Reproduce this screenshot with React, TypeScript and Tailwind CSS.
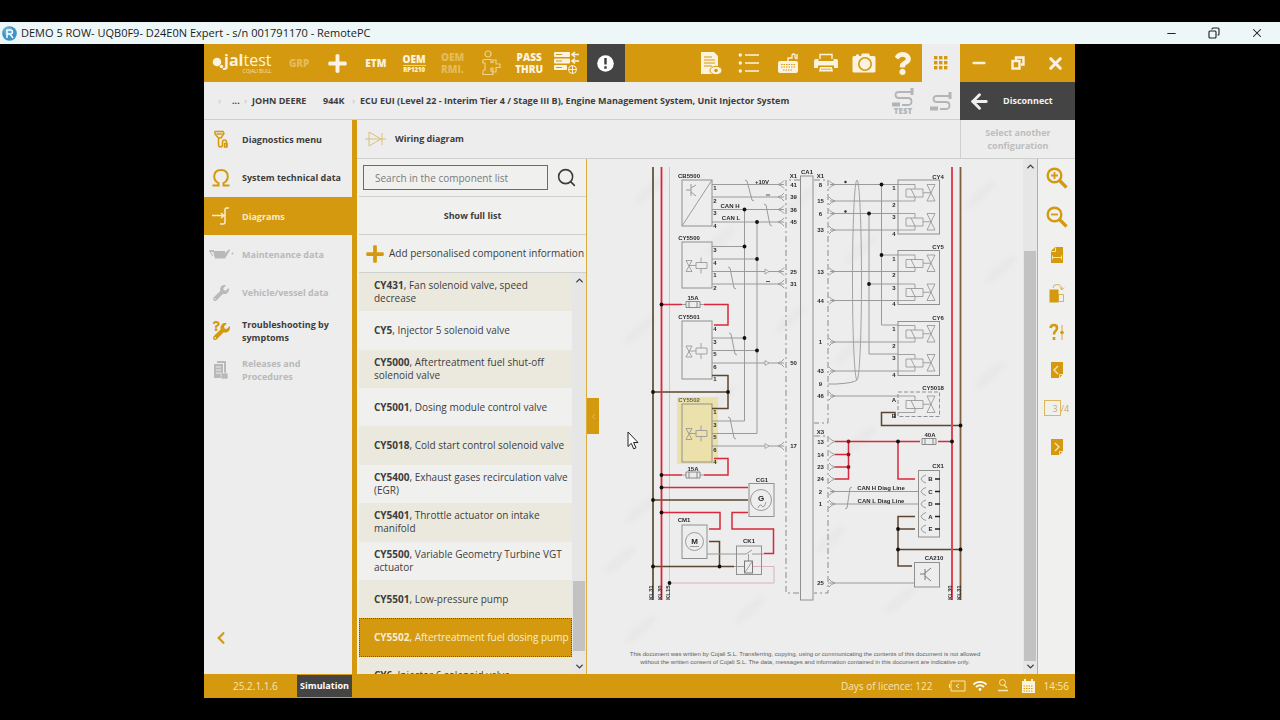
import type { ReactNode } from "react";
import { Minus, Copy, X, ArrowLeft, ChevronUp, ChevronDown, ChevronLeft, Search } from "lucide-react";
import { FaPlus, FaQuestion, FaWifi, FaWrench, FaChevronLeft } from "react-icons/fa";

const GREY = "#9a9a9a";
const RED = "#d8283c";
const BROWN = "#5c4630";

/* ---------- toolbar icons ---------- */

const ReportIcon = () => (
  <svg width="24" height="26" viewBox="0 0 24 26" fill="currentColor">
    <path d="M2 2h13l4 4v12H2z" />
    <path d="M5 7h8M5 10h11M5 13h11M5 16h8" stroke="#d4990e" strokeWidth="1" />
    <path d="M2 18h10l2 6H2z" />
    <ellipse cx="17" cy="20.5" rx="6" ry="4.2" stroke="#d4990e" strokeWidth="1" />
    <circle cx="17" cy="20.5" r="1.8" fill="#d4990e" />
  </svg>
);

const ListIcon = () => (
  <svg width="22" height="24" viewBox="0 0 22 24" fill="none" stroke="currentColor" strokeWidth="1.6">
    <path d="M7 4h14M7 12h14M7 20h14" />
    <g fill="currentColor" stroke="none">
      <circle cx="2.3" cy="4" r="1.7" />
      <circle cx="2.3" cy="12" r="1.7" />
      <circle cx="2.3" cy="20" r="1.7" />
    </g>
  </svg>
);

const KeyboardIcon = () => (
  <svg width="22" height="22" viewBox="0 0 22 22">
    <rect x="1" y="9" width="20" height="12" rx="2" fill="currentColor" />
    <path d="M11 9V6h4V3.500q0-1.500 1.500-1.500T18 3.500V5q0 1.500 2 1.500V2" fill="none" stroke="currentColor" strokeWidth="1.300" />
    <path d="M4 12.500h14M4 15h14M6 18h10" stroke="#d4990e" strokeWidth="1" strokeDasharray="1.500 1" />
  </svg>
);

const PrinterIcon = () => (
  <svg width="26" height="20" viewBox="0 0 26 20" fill="currentColor">
    <path d="M7 6V1.500h12V6" fill="none" stroke="currentColor" strokeWidth="1.400" />
    <path d="M3 6h2.500v2h15V6H23q2 0 2 2v7h-4v-2.500H5V15H1V8q0-2 2-2z" />
    <path d="M7 14h12l1 4.500H6z" />
    <path d="M8 16.200h10" stroke="#d4990e" strokeWidth=".8" />
  </svg>
);

const CameraIcon = () => (
  <svg width="24" height="22" viewBox="0 0 24 22">
    <path d="M2 4h2V2.500h3V4h2l1-2.500h7L18 4h4q1.500 0 1.500 1.500V19q0 1.500-1.500 1.500H2Q.500 20.500.500 19V5.500Q.500 4 2 4z" fill="currentColor" />
    <circle cx="13" cy="12" r="6.200" fill="none" stroke="#d4990e" strokeWidth="1.600" />
  </svg>
);

const ServersIcon = () => (
  <svg width="26" height="24" viewBox="0 0 26 24" fill="currentColor">
    <rect x="0" y="1" width="16" height="5" rx="1" />
    <rect x="0" y="7.500" width="16" height="5" rx="1" />
    <rect x="0" y="14" width="13" height="5" rx="1" />
    <path d="M2 3.500h6M2 10h6M2 16.500h6" stroke="#d4990e" strokeWidth="1" />
    <path d="M18 3.500h7M21 1l-3 2.500L21 6M18 10h7M21 7.500l-3 2.500 3 2.500" fill="none" stroke="currentColor" strokeWidth="1.600" />
    <circle cx="18.500" cy="18.500" r="4" fill="none" stroke="currentColor" strokeWidth="1" />
    <path d="M14.500 18.500h8M18.500 14.500v8" stroke="currentColor" strokeWidth="1" />
  </svg>
);

const InfoPlusIcon = () => (
  <svg width="22" height="26" viewBox="0 0 22 26" fill="none" stroke="currentColor" strokeWidth="1.200">
    <circle cx="8" cy="4" r="3" />
    <path d="M4 9.500h7v3h2V10h3v4h4v3.500h-4V22h-3v-4h-2v3q2 0 2 3.500H3Q2 20 5 20v-7H3q-1-2 1-3.500z" />
  </svg>
);

const GridIcon = () => (
  <svg width="14" height="14" viewBox="0 0 14 14" fill="#d4990e">
    {[0, 5, 10].map((x) => [0, 5, 10].map((y) => <rect key={`${x}-${y}`} x={x} y={y} width="3.400" height="3.400" />))}
  </svg>
);

const RestoreIcon = () => (
  <svg width="14" height="14" viewBox="0 0 14 14" fill="none" stroke="currentColor" strokeWidth="2.400">
    <path d="M5 4.500V1.500h7.500v7H10" />
    <rect x="1.500" y="5" width="7" height="7.500" />
  </svg>
);

const CableIcon = ({ label }: { label?: string }) => (
  <svg width="26" height="28" viewBox="0 0 26 28" fill="none" stroke="#b4b4b4" strokeWidth="1.800">
    <g transform={label ? undefined : "translate(0 4)"}>
      <path d="M22 5H9Q5.500 5 5.500 8t3.500 3h9q3.500 0 3.500 3.500T18 18h-6" />
      <rect x="20.500" y="1" width="3" height="7" fill="#b4b4b4" stroke="none" />
      <rect x="2" y="15.500" width="8" height="4" fill="#b4b4b4" stroke="none" />
    </g>
    {label && (
      <text x="13" y="27" textAnchor="middle" fontSize="8" fontWeight="800" fill="#b4b4b4" stroke="none" fontFamily="Open Sans">
        {label}
      </text>
    )}
  </svg>
);

/* ---------- side menu icons ---------- */

const DiagnosticsIcon = () => (
  <svg width="18" height="20" viewBox="0 0 18 20" fill="none" stroke="currentColor" strokeWidth="1.500">
    <path d="M3 2.500h8l1 2-3 4.500H6.500L3 5zM6.500 9v6.500q0 2.500 2 2.500t2-2.500V13q0-2 2-2t2 2v4" />
    <path d="M4.500 5h6" />
    <rect x="12.500" y="14.500" width="2.500" height="3.500" />
  </svg>
);

const OmegaIcon = () => (
  <svg width="20" height="20" viewBox="0 0 20 20" fill="none" stroke="currentColor" strokeWidth="2">
    <path d="M1.500 17.500h6v-2.300Q3.200 13 3.200 8.600 3.200 2 10 2t6.800 6.600q0 4.400-4.300 6.600v2.300h6" />
  </svg>
);

const DiagramIcon = () => (
  <svg width="18" height="20" viewBox="0 0 18 20" fill="none" stroke="currentColor" strokeWidth="1.500">
    <path d="M0 9.500h12M17 2h-2.500q-1.500 0-1.500 2v12q0 2-2 2H8M9 7l3 2.500L9 12" />
  </svg>
);

const OilCanIcon = () => (
  <svg width="26" height="12" viewBox="0 0 26 12" fill="currentColor">
    <path d="M1 2h5v2H2.500L5 8M5 3h12v2l4-3.500h1.500L17 10.500H7z" />
    <path d="M5 8L1.500 3" stroke="currentColor" />
    <circle cx="24.500" cy="5.500" r="1" />
  </svg>
);

const TroubleIcon = () => (
  <span className="relative flex">
    <FaWrench size={17} />
    <FaQuestion size={10} className="absolute -top-0.5 -left-0.5" />
  </span>
);

const ReleasesIcon = () => (
  <svg width="18" height="20" viewBox="0 0 18 20" fill="currentColor">
    <path d="M5 1h9v12h-2V3H5z" />
    <path d="M2 4h9v14H2z" />
    <path d="M4 7h5M4 10h5M4 13h5" stroke="#ededed" />
    <rect x="9" y="13" width="7" height="6" rx="1" stroke="#ededed" strokeWidth=".6" />
  </svg>
);

/* ---------- diagram tool icons ---------- */

const ZoomIcon = ({ plus }: { plus?: boolean }) => (
  <svg width="22" height="22" viewBox="0 0 22 22" fill="none" stroke="currentColor" strokeWidth="2.400">
    <circle cx="8.500" cy="8.500" r="6.800" />
    <path d="M13.500 13.500l7 7" strokeWidth="3.200" />
    <path d={plus ? "M5 8.500h7M8.500 5v7" : "M5 8.500h7"} strokeWidth="1.800" />
  </svg>
);

const FitWidthIcon = () => (
  <svg width="14" height="18" viewBox="0 0 14 18" fill="none">
    <path d="M5 1h8v16H1V5z" fill="currentColor" />
    <path d="M5.500 1.500V5.500H1.500M2.500 11.500h9M2.500 9.500v4M11.500 9.500v4" stroke="#f3e3b8" />
  </svg>
);

const PageIcon = ({ d }: { d: string }) => (
  <svg width="14" height="18" viewBox="0 0 14 18" fill="none">
    <path d="M1 1h12v12l-3.500 4H1z" fill="currentColor" />
    <path d={d} stroke="#f3e3b8" strokeWidth="1.400" />
    <path d="M9.500 17v-3.500H13" stroke="#f3e3b8" strokeWidth=".9" />
  </svg>
);

const RotateIcon = () => (
  <svg width="16" height="20" viewBox="0 0 16 20" fill="none" stroke="currentColor">
    <rect x="1" y="7" width="8" height="12" fill="currentColor" />
    <path d="M9.500 11.500h5v7h-5zM4 5Q4 1.500 8 1.500T13 6M11 4.500L13 7l2-2.500" opacity=".7" />
  </svg>
);

const HelpPinIcon = () => (
  <svg width="16" height="18" viewBox="0 0 16 18" fill="none" stroke="currentColor">
    <path d="M1.500 5Q2 2 5 2t3 3q0 2-1.500 3T5 11.500M5 14v3" strokeWidth="2.600" />
    <path d="M13 2v15M11 9.500h4" strokeWidth=".8" />
    <circle cx="13" cy="9.500" r="1.300" fill="currentColor" />
  </svg>
);

/* ---------- wiring diagram ---------- */

const Wire = ({ d, c = GREY, w = 1 }: { d: string; c?: string; w?: number }) => (
  <path d={d} fill="none" stroke={c} strokeWidth={w} />
);

const Lbl = ({ x, y, children, s = 6 }: { x: number; y: number; children: ReactNode; s?: number }) => (
  <text x={x} y={y} textAnchor="middle" fontSize={s}>
    {children}
  </text>
);

const Box = ({ x, y, w, h, dash }: { x: number; y: number; w: number; h: number; dash?: string }) => (
  <rect x={x} y={y} width={w} height={h} fill="none" stroke="#909090" strokeWidth="1" strokeDasharray={dash} />
);

const Dots = ({ at, c = "#111" }: { at: [number, number][]; c?: string }) => (
  <g fill={c}>
    {at.map(([x, y]) => (
      <circle key={`${x}-${y}`} cx={x} cy={y} r="1.900" />
    ))}
  </g>
);

const Actuator = ({ y }: { y: number }) => (
  <path
    d={`M686 ${y - 5}h6l-6 11h6zM689 ${y}h7M696 ${y - 3}h11v6h-11zM701 ${y - 8}v5M701 ${y + 3}v5`}
    fill="none"
    stroke={GREY}
    strokeWidth=".9"
  />
);

const Injector = ({ y, h = 16.5 }: { y: number; h?: number }) => (
  <path
    d={`M898 ${y}h17v4.500M906 ${y + 4.500}h17v8h-17zM911 ${y + 4.500}l4 8v4H898M923 ${y + h / 2}h8M927 ${y}h8l-8 ${h}h8z`}
    fill="none"
    stroke={GREY}
    strokeWidth=".9"
  />
);

const Fuse = ({ x, y }: { x: number; y: number }) => (
  <path d={`M${x} ${y - 3}h14v6h-14zM${x + 3} ${y - 3}v6M${x + 11} ${y - 3}v6`} fill="#ececec" stroke="#808080" strokeWidth=".9" />
);

const Pins = ({ x, rows }: { x: number; rows: [number, string][] }) => (
  <>
    {rows.map(([y, t]) => (
      <Lbl key={y} x={x} y={y + 2.2}>
        {t}
      </Lbl>
    ))}
  </>
);

const leftPins: [number, string][] = [
  [176, "X1"], [184.5, "41"], [197, "39"], [209.5, "36"], [222, "45"], [271.5, "25"], [284, "31"], [363, "50"], [446, "17"],
];
const rightPins: [number, string][] = [
  [176, "X1"], [184.5, "8"], [201, "15"], [213.5, "6"], [230, "33"], [271.5, "13"], [300.5, "44"], [342, "1"], [371, "43"], [383.5, "9"],
  [396, "46"], [431.5, "X3"], [441.5, "13"], [454.5, "14"], [467, "23"], [479, "24"], [491.5, "2"], [504, "1"], [583, "25"],
];
const boxPins: [number, string][] = [
  [188, "1"], [200.5, "2"], [213, "3"], [225.5, "4"], [250, "3"], [262.5, "4"], [275, "1"], [287.5, "2"],
  [329, "4"], [341.5, "3"], [354, "5"], [366.5, "6"], [379, "1"], [412, "1"], [424.5, "3"], [437, "5"], [449.5, "6"], [462, "4"],
];
const injectorPins: [number, string][] = [
  [188, "1"], [204.5, "2"], [217, "3"], [233.5, "4"], [259, "1"], [275, "2"], [287.5, "3"], [304, "4"],
  [329, "1"], [345.5, "2"], [358, "3"], [374.5, "4"], [400, "A"], [416, "B"],
];
const plugPins: [number, string][] = [[479, "B"], [491.5, "C"], [504, "D"], [516.5, "A"], [529, "E"]];
const railNames: [number, string][] = [[653, "KL31"], [661.5, "KL30"], [670, "KL15"], [952, "KL30"], [960.5, "KL31"]];
const watermarks: [number, number][] = [
  [650, 190], [800, 200], [980, 195], [720, 240], [860, 250], [1000, 270], [640, 330], [790, 320], [990, 375], [720, 400],
  [850, 350], [620, 560], [860, 440], [640, 510], [830, 540], [750, 610], [900, 600], [640, 630],
];

function WiringDiagram() {
  return (
    <svg viewBox="587 159 436 491" className="block min-h-0 w-full flex-1" fontFamily="'Liberation Sans', Arial, sans-serif" fontWeight="700" fill="#2a2a2a" role="img" aria-label="Wiring diagram">
      <g fill="#d9d9d9" opacity=".22" className="blur-[2px]">
        {watermarks.map(([x, y]) => (
          <ellipse key={`${x}-${y}`} cx={x} cy={y} rx="20" ry="5" transform={`rotate(-42 ${x} ${y})`} />
        ))}
      </g>

      <rect x="677" y="397" width="41" height="67" fill="#ece1ab" />

      {/* connector CA1 */}
      <Box x={800.5} y={176} w={12.5} h={424} />
      <path d="M800 180H786V593h14M814 180h14V423H814M814 436h14V593H814" fill="none" stroke="#8a8a8a" strokeDasharray="6 3 2 3" />

      {/* CAN bus and signal wires, left side */}
      <Wire d="M712 184.500H784M712 197H784M712 209.500H784M712 222H784M712 246.500H744.500M712 259H757M712 271.500H784M712 284H784M712 338H744.500M712 350.500H757M712 363H784M712 421H744.500V209.500M712 433.500H757V222M712 446H784" />
      {[184.5, 197, 209.5, 222, 271.5, 284, 363, 446].map((y) => (
        <Wire key={y} d={`M784 ${y - 4}q-2 3-6 4q4 1 6 4`} />
      ))}
      {[271.5, 363, 446].map((y) => (
        <path key={y} d={`M765 ${y - 2.5}l4 2.500-4 2.500z`} fill="#eee" stroke={GREY} strokeWidth=".8" />
      ))}
      <Wire d="M745 180l2 1 5 19 2 1M764 204l2 1 4 20 2 1M728 267l2 1 4 20 2 1M729 333l2 1 4 20 2 1M728 417l2 1 4 20 2 1" />
      <Wire d="M766 195h4M766 281.500h4" c="#555" />

      {/* left components */}
      <Box x={682} y={180} w={30} h={46} />
      <Wire d="M682 226L712 180M686 190h5M691 184v12M691 188l5-3M691 192l5 4" />
      <Box x={682} y={242} w={30} h={46} />
      <Box x={682} y={321} w={30} h={58} />
      <Box x={682} y={404} w={30} h={58} />
      <Actuator y={265.5} />
      <Actuator y={351} />
      <Actuator y={433.5} />

      {/* supply rails, left side */}
      <Wire d="M669.500 167V600" c="#dcc3c0" />
      <Wire d="M669.500 583H774V566.500H752" c="#dcb0bd" />
      <Wire d="M661.500 304.500H682M704 304.500H728V325H714M714 458.500H728V475H704M682 475H661.500M661.500 487.500H748M661.500 512.500H720V529H709M748 512.500H732V529H773.500V553.500H764" c={RED} w={1.5} />
      <Wire d="M682 304.500H704M682 475H704" />
      <Wire d="M712 375.500H728V408.500H712M653 392H728M653 500H748M709 541.500H719.500V566.500M653 566.500H734" c={BROWN} w={1.5} />
      <Wire d="M653 167V600" c="#63553a" w={1.8} />
      <Wire d="M661.500 167V600" c={RED} w={1.8} />
      <Fuse x={686} y={304.5} />
      <Fuse x={686} y={475} />

      {/* generator, motor, relay */}
      <Box x={749} y={483.5} w={25} h={33} />
      <circle cx="761" cy="500" r="10.500" fill="none" stroke={GREY} />
      <Wire d="M758 508q2-5 4-2t4-4" />
      <Lbl x={761} y={501} s={8}>G</Lbl>
      <Box x={682} y={525} w={25} h={33.5} />
      <circle cx="694.500" cy="541.500" r="9" fill="none" stroke={GREY} />
      <Wire d="M690 546.500h9" />
      <Lbl x={694.5} y={543.5} s={8}>M</Lbl>
      <Wire d="M707 554H746L752 550M752 554H764M748.500 554V561M734 566.500H744" />
      <Box x={736.5} y={546} w={25} h={28.5} />
      <rect x="744.500" y="561" width="8" height="12" fill="none" stroke="#777" />
      <Wire d="M744.500 573L752.500 561" />

      {/* injector bank wires */}
      <Wire d="M830 184.500H898M830 201H898M830 213.500H898M830 230H898M830 271.500H898M830 300.500H898M830 342H898M830 371H898M830 396H898M881.500 184V325H898M881.500 255H898M869 213.500V354H898M869 284H898M828 384h8Q854 383 857 380M828 583H914.500M830 491.500H918M830 504H918" />
      {[184.5, 201, 213.5, 230, 271.5, 300.5, 342, 371, 396, 491.5, 504, 583, 441.5, 454.5, 467, 479].map((y) => (
        <Wire key={y} d={`M829 ${y - 4}q2 3 6 4q-4 1-6 4`} />
      ))}
      <ellipse cx="857" cy="280" rx="4.500" ry="100" fill="none" stroke={GREY} strokeWidth=".9" />
      <Wire d="M845 509l2-1 3-20 2-1" />

      {/* right components */}
      <Box x={898} y={180} w={41.5} h={54} />
      <Box x={898} y={250.5} w={41.5} h={54} />
      <Box x={898} y={321.5} w={41.5} h={54} />
      <Box x={898} y={392} w={41.5} h={24.5} dash="4 2" />
      {[184.5, 213.5, 255, 284, 325.5, 354.5, 396].map((y) => (
        <Injector key={y} y={y} />
      ))}
      <Box x={918.5} y={470.5} w={21} h={66.5} />
      {plugPins.map(([y, t]) => (
        <g key={t}>
          <Wire d={`M926 ${y - 4}q-4 1-5 4q1 3 5 4`} />
          <Lbl x={930.5} y={y + 2.2}>{t}</Lbl>
          <Wire d={`M935 ${y}h5`} c="#222" w={1.5} />
        </g>
      ))}
      <Box x={914.5} y={562.5} w={25} h={24.5} />
      <Wire d="M920 574h5M925 569v11M925 573l6-5M925 576l6 5" c="#777" />

      {/* supply rails, right side */}
      <Wire d="M835 441.500H920M938 441.500H952M848.500 441.500V479H835M835 454.500H848.500M835 467H848.500M898 441.500V479H915" c={RED} w={1.5} />
      <Wire d="M895 418V412.500H881.500V425.500H960.500M915 516.500H898V566H912M915 529H898M898 549.500H960.500" c={BROWN} w={1.5} />
      <Wire d="M952 167V600" c="#e04552" w={2} />
      <Wire d="M960.500 167V600" c="#80603c" w={1.8} />
      <Fuse x={922} y={441.5} />

      <Dots at={[[744.5, 209.5], [757, 222], [744.5, 246.5], [757, 259], [744.5, 338], [757, 350.5], [661.5, 304.5], [653, 392], [728, 392], [661.5, 475], [661.5, 487.5], [653, 500], [661.5, 512.5], [653, 566.5], [719.5, 566.5], [669.5, 583], [881.5, 184.5], [869, 213.5], [881.5, 255], [869, 284], [952, 441.5], [898, 441.5], [960.5, 425.5], [898, 529], [898, 549.5], [960.5, 549.5]]} />
      <Dots at={[[848.5, 441.5], [848.5, 454.5], [848.5, 467]]} c="#8c1420" />
      <circle cx="845.500" cy="182" r="1.200" />
      <circle cx="845.500" cy="211.500" r="1.200" />

      {/* labels */}
      <Lbl x={689} y={177.5}>CB5500</Lbl>
      <Lbl x={689} y={240}>CY5500</Lbl>
      <Lbl x={689} y={318.5}>CY5501</Lbl>
      <g opacity=".7"><Lbl x={689} y={401.5}>CY5502</Lbl></g>
      <Lbl x={693} y={300}>15A</Lbl>
      <Lbl x={693} y={470.5}>15A</Lbl>
      <Lbl x={762} y={481.5}>CG1</Lbl>
      <Lbl x={684} y={522}>CM1</Lbl>
      <Lbl x={749} y={543}>CK1</Lbl>
      <Lbl x={730} y={207.5}>CAN H</Lbl>
      <Lbl x={731} y={220}>CAN L</Lbl>
      <Lbl x={762} y={183.5}>+10V</Lbl>
      <Lbl x={807} y={173.5}>CA1</Lbl>
      <Lbl x={938} y={178.5}>CY4</Lbl>
      <Lbl x={938} y={249}>CY5</Lbl>
      <Lbl x={938} y={319.5}>CY6</Lbl>
      <Lbl x={933} y={389.5}>CY5018</Lbl>
      <Lbl x={930} y={437}>40A</Lbl>
      <Lbl x={938} y={468}>CX1</Lbl>
      <Lbl x={934} y={559.5}>CA210</Lbl>
      <Lbl x={881} y={490}>CAN H Diag Line</Lbl>
      <Lbl x={881} y={502.5}>CAN L Diag Line</Lbl>
      <Pins x={793.5} rows={leftPins} />
      <Pins x={820.5} rows={rightPins} />
      <Pins x={715} rows={boxPins} />
      <Pins x={894} rows={injectorPins} />
      {railNames.map(([x, t]) => (
        <text key={x} fontSize="6" transform={`translate(${x} 600) rotate(-90)`}>
          {t}
        </text>
      ))}
    </svg>
  );
}

/* ---------- data ---------- */

const menu: { label: string; icon: ReactNode; tone: string }[] = [
  { label: "Diagnostics menu", icon: <DiagnosticsIcon />, tone: "text-[#3d3d3d]" },
  { label: "System technical data", icon: <OmegaIcon />, tone: "text-[#3d3d3d]" },
  { label: "Diagrams", icon: <DiagramIcon />, tone: "bg-[#d4990e] text-[#f6ecd2]" },
  { label: "Maintenance data", icon: <OilCanIcon />, tone: "text-[#b9b9b9]" },
  { label: "Vehicle/vessel data", icon: <FaWrench size={16} />, tone: "text-[#b9b9b9]" },
  { label: "Troubleshooting by symptoms", icon: <TroubleIcon />, tone: "text-[#3d3d3d]" },
  { label: "Releases and Procedures", icon: <ReleasesIcon />, tone: "text-[#b9b9b9]" },
];

const components: [string, string][] = [
  ["CY431", "Fan solenoid valve, speed decrease"],
  ["CY5", "Injector 5 solenoid valve"],
  ["CY5000", "Aftertreatment fuel shut-off solenoid valve"],
  ["CY5001", "Dosing module control valve"],
  ["CY5018", "Cold start control solenoid valve"],
  ["CY5400", "Exhaust gases recirculation valve (EGR)"],
  ["CY5401", "Throttle actuator on intake manifold"],
  ["CY5500", "Variable Geometry Turbine VGT actuator"],
  ["CY5501", "Low-pressure pump"],
  ["CY5502", "Aftertreatment fuel dosing pump"],
  ["CY6", "Injector 6 solenoid valve"],
];

const Tool = ({ label, children, tone = "text-[#fbf3df]" }: { label: string; children: ReactNode; tone?: string }) => (
  <button aria-label={label} className={`flex items-center justify-center ${tone}`}>
    {children}
  </button>
);

export default function App() {
  return (
    <div className="flex h-screen min-h-[640px] flex-col bg-black py-[22px] font-['Open_Sans','Noto_Sans',sans-serif] text-[#3d3d3d]">
      <header className="flex h-[22px] shrink-0 items-center bg-[#edf7f8] pl-0.5 text-[11px] text-[#1c1c1c]">
        <svg width="15" height="15" viewBox="0 0 15 15" className="mr-1">
          <circle cx="7.500" cy="7.500" r="7.300" fill="#3c94c8" />
          <circle cx="6" cy="5" r="4.500" fill="#79bde0" opacity=".6" />
          <path d="M5 12V4h3.500q2 0 2 2T8.500 8H5M8 8l3 4" fill="none" stroke="#fff" strokeWidth="1.500" />
        </svg>
        <h1>DEMO 5 ROW- UQB0F9- D24E0N Expert - s/n 001791170 - RemotePC</h1>
        <div className="ml-auto flex items-center gap-[30px] pr-4">
          <button aria-label="Minimize window"><Minus size={13} strokeWidth={1.8} /></button>
          <button aria-label="Restore window"><Copy size={12} strokeWidth={2.2} className="-scale-x-100" /></button>
          <button aria-label="Close window"><X size={14} strokeWidth={1.8} /></button>
        </div>
      </header>

      <main className="mr-[205px] ml-[204px] flex min-h-0 flex-1 flex-col bg-[#ededed]">
        <nav className="flex h-[38px] shrink-0 bg-[#d4990e]">
          <div className="flex w-[76px] items-center pl-2 text-[#fbf3df]">
            <svg width="12" height="18" viewBox="0 0 12 18" fill="currentColor">
              <circle cx="5" cy="8" r="4.300" />
              <circle cx="9.500" cy="12.500" r="1.800" />
            </svg>
            <div className="flex flex-col items-end">
              <div className="text-[16px] leading-[16px]"><b>jal</b>test</div>
              <div className="text-[5px] leading-[6px] opacity-80">COJALI BULL</div>
            </div>
          </div>
          <div className="grid w-[345px] grid-cols-9 text-[10px] leading-[12px] font-extrabold">
            <Tool label="GRP" tone="text-[#e3bb5c]">GRP</Tool>
            <Tool label="Add"><FaPlus size={21} /></Tool>
            <Tool label="ETM">ETM</Tool>
            <Tool label="OEM RP1210"><span>OEM<span className="block border-t border-[#f0d591] text-[6px] leading-[8px]">RP1210</span></span></Tool>
            <Tool label="OEM RMI" tone="text-[#e3bb5c]"><span>OEM<br />RMI.</span></Tool>
            <Tool label="Information" tone="text-[#ecd08c]"><InfoPlusIcon /></Tool>
            <Tool label="Pass thru"><span>PASS<br />THRU</span></Tool>
            <Tool label="Servers"><ServersIcon /></Tool>
            <Tool label="Alerts" tone="bg-[#444444] text-white">
              <svg width="17" height="17" viewBox="0 0 17 17">
                <circle cx="8.500" cy="8.500" r="8.300" fill="currentColor" />
                <path d="M8.500 3v6.500M8.500 11.300v2.400" stroke="#3c3c3c" strokeWidth="2.400" />
              </svg>
            </Tool>
          </div>
          <div className="ml-auto grid w-[383px] grid-cols-10">
            <Tool label="Report"><ReportIcon /></Tool>
            <Tool label="List"><ListIcon /></Tool>
            <Tool label="Keyboard"><KeyboardIcon /></Tool>
            <Tool label="Print"><PrinterIcon /></Tool>
            <Tool label="Camera"><CameraIcon /></Tool>
            <Tool label="Help"><FaQuestion size={23} /></Tool>
            <Tool label="Apps" tone="bg-[#ededed]"><GridIcon /></Tool>
            <Tool label="Minimize"><Minus size={18} strokeWidth={3.5} /></Tool>
            <Tool label="Restore"><RestoreIcon /></Tool>
            <Tool label="Close"><X size={19} strokeWidth={4} /></Tool>
          </div>
        </nav>

        <div className="flex h-[38px] shrink-0 text-[9px] font-bold">
          <div className="flex flex-1 items-center border-b border-[#cdd0cd] pl-3">
            <span className="w-4 pl-0.5 text-[#cfcfcf]">›</span>
            <a href="#root" className="w-3">...</a>
            <span className="w-2 text-[#cfcfcf]">›</span>
            <a href="#deere" className="w-[71px]">JOHN DEERE</a>
            <a href="#944k" className="w-[29px]">944K</a>
            <span className="w-2 text-[#cfcfcf]">›</span>
            <span>ECU EUI (Level 22 - Interim Tier 4 / Stage III B), Engine Management System, Unit Injector System</span>
            <span className="ml-auto flex gap-3 pr-1.5">
              <CableIcon label="TEST" />
              <CableIcon />
            </span>
          </div>
          <button className="flex w-[115px] items-center gap-3 bg-[#444444] pl-2 text-[#f0f0f0]">
            <ArrowLeft size={23} strokeWidth={3} />
            Disconnect
          </button>
        </div>

        <div className="flex min-h-0 flex-1">
          <aside className="flex w-[148px] shrink-0 flex-col">
            <div className="grid h-[269px] grid-rows-7">
              {menu.map((m) => (
                <button key={m.label} className={`flex items-center pl-1 text-left text-[9px] leading-[13px] font-bold ${m.tone}`}>
                  <span className={`flex w-[26px] shrink-0 justify-center ${m.tone === "text-[#3d3d3d]" ? "text-[#d4990e]" : ""}`}>{m.icon}</span>
                  <span className="ml-2 w-[106px] shrink-0 pr-1">{m.label}</span>
                </button>
              ))}
            </div>
            <button aria-label="Back" className="mt-auto mb-[29px] ml-2.5 self-start text-[#d4990e]"><FaChevronLeft size={14} /></button>
          </aside>
          <div className="w-[5px] shrink-0 bg-[#d4990e]" />

          <div className="flex min-w-0 flex-1 flex-col">
            <div className="flex h-[39px] shrink-0 border-b border-[#cdd0cd]">
              <div className="flex flex-1 items-center gap-2 pl-2 text-[9px] font-bold">
                <svg width="22" height="18" viewBox="0 0 22 18" fill="none" stroke="#dcc07a">
                  <path d="M0 9h21M4 2v14l12-7zM17 3v12" />
                </svg>
                <h2>Wiring diagram</h2>
              </div>
              <button disabled className="w-[115px] border-l border-[#cdd0cd] px-4 text-[9px] leading-[13px] font-bold text-[#bdbdbd]">
                Select another configuration
              </button>
            </div>

            <div className="flex min-h-0 flex-1">
              <section className="flex w-[230px] shrink-0 flex-col border-r border-[#dcae3e] bg-[#f0f0ef] pl-0.5">
                <form className="flex h-[38px] shrink-0 items-center gap-2 border-b border-[#cdd0cd] pl-1" onSubmit={(e) => e.preventDefault()}>
                  <input
                    aria-label="Search in the component list"
                    placeholder="Search in the component list"
                    className="h-[25px] w-[185px] border border-[#6b6b6b] px-[11px] text-[10px] placeholder:text-[#7a7a7a]"
                  />
                  <button aria-label="Search"><Search size={21} strokeWidth={1.8} /></button>
                </form>
                <button className="h-[38px] shrink-0 border-b border-[#cdd0cd] text-[9px] font-bold">Show full list</button>
                <button className="flex h-[38px] shrink-0 items-center gap-1 border-b border-[#cdd0cd] pl-1.5 text-[10px] whitespace-nowrap">
                  <FaPlus size={20} color="#d4990e" className="shrink-0" />
                  Add personalised component information
                </button>
                <div className="flex min-h-0 flex-1">
                  <div className="min-h-0 flex-1 overflow-hidden">
                    <ul className="grid h-[422px] grid-rows-11">
                      {components.map(([code, name], i) => (
                        <li key={code} className="flex">
                          <button
                            className={`flex-1 border pl-[14px] text-left text-[10px] leading-[13px] ${
                              code === "CY5502"
                                ? "border-dotted border-[#6b5a2a] bg-[#d4990e] text-[#f8edd2]"
                                : i % 2 === 0
                                  ? "border-transparent bg-[#ebe9de]"
                                  : "border-transparent"
                            }`}
                          >
                            <b>{code}</b>, {name}
                          </button>
                        </li>
                      ))}
                    </ul>
                  </div>
                  <div className="flex w-[14px] shrink-0 flex-col items-center bg-[#e6e6e6] py-0.5">
                    <ChevronUp size={11} strokeWidth={3} />
                    <div className="mt-auto h-[70px] w-3 bg-[#c2c2c2]" />
                    <ChevronDown size={11} strokeWidth={3} className="mt-2.5" />
                  </div>
                </div>
              </section>

              <section className="relative flex min-w-0 flex-1 flex-col">
                <WiringDiagram />
                <p className="h-6 shrink-0 text-center font-['Liberation_Sans',sans-serif] text-[6px] leading-[8px] text-[#606060]">
                  This document was written by Cojali S.L. Transferring, copying, using or communicating the contents of this document is not allowed
                  <br />
                  without the written consent of Cojali S.L. The data, messages and information contained in this document are indicative only.
                </p>
                <button aria-label="Collapse list" className="absolute top-[239px] left-0 flex h-9 w-3 items-center justify-center bg-[#d4990e] text-[#ecc766]">
                  <ChevronLeft size={9} />
                </button>
                <svg width="12" height="19" viewBox="0 0 12 19" className="absolute top-[272px] left-10">
                  <path d="M1 1v14.500l3.300-3.200 2.400 5.500 2.300-1-2.400-5.300H11z" fill="#fff" stroke="#222" />
                </svg>
              </section>

              <div className="flex w-[14px] shrink-0 flex-col items-center bg-[#e6e6e6] py-0.5">
                <ChevronUp size={11} strokeWidth={3} />
                <div className="mt-[79px] w-3 flex-1 bg-[#c2c2c2]" />
                <ChevronDown size={11} strokeWidth={3} />
              </div>

              <div className="w-[38px] shrink-0 border-l border-[#dcae3e] bg-[#f0f0ef] text-[#d4990e]">
                <div className="grid h-[307px] grid-rows-8">
                  <Tool label="Zoom in" tone="text-[#d4990e]"><ZoomIcon plus /></Tool>
                  <Tool label="Zoom out" tone="text-[#d4990e]"><ZoomIcon /></Tool>
                  <Tool label="Fit width" tone="text-[#d4990e]"><FitWidthIcon /></Tool>
                  <Tool label="Rotate" tone="text-[#d4990e]"><RotateIcon /></Tool>
                  <Tool label="Component help" tone="text-[#d4990e]"><HelpPinIcon /></Tool>
                  <Tool label="Previous page" tone="text-[#d4990e]"><PageIcon d="M8 5L4 9l4 4" /></Tool>
                  <div className="flex items-center justify-center text-[9px] text-[#c9ab5e]">
                    <input aria-label="Page" defaultValue="3" className="h-4 w-[17px] border border-[#dcb75c] pr-0.5 text-right" />
                    /4
                  </div>
                  <Tool label="Next page" tone="text-[#d4990e]"><PageIcon d="M5 5l4 4-4 4" /></Tool>
                </div>
              </div>
            </div>
          </div>
        </div>

        <footer className="flex h-6 shrink-0 items-center bg-[#d4990e] text-[10px] text-[#f6e6bd]">
          <span className="w-[93px] pl-[29px]">25.2.1.1.6</span>
          <span className="flex h-[22px] w-[55px] items-center justify-center bg-[#444444] text-[9px] font-bold text-white">Simulation</span>
          <span className="ml-auto">Days of licence: 122</span>
          <svg width="17" height="12" viewBox="0 0 17 12" fill="none" stroke="currentColor" className="ml-4">
            <path d="M2 1h14v10H2zM.500 4v4M10 4L7 6l3 2" />
          </svg>
          <FaWifi size={14} className="ml-[7px] text-white" />
          <svg width="12" height="14" viewBox="0 0 12 14" fill="none" stroke="currentColor" className="ml-2.5">
            <circle cx="5.500" cy="3.500" r="3" />
            <path d="M7 6l3 3M1 11.500h10" strokeWidth="1.300" />
          </svg>
          <svg width="15" height="15" viewBox="0 0 15 15" fill="#fbf3df" className="ml-3">
            <path d="M1 2h13v12H1zM3 0h2v3H3zM10 0h2v3h-2z" />
            <path d="M2.500 7h10M2.500 9.500h10M2.500 12h10" stroke="#d4990e" strokeDasharray="1.500 1" />
          </svg>
          <span className="mr-1.5 ml-2">14:56</span>
        </footer>
      </main>
    </div>
  );
}
